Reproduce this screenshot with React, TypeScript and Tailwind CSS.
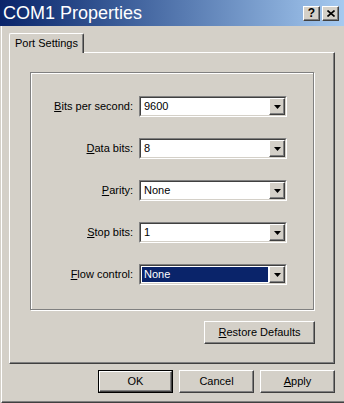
const raised =
  "border border-t-white border-l-white border-r-[#404040] border-b-[#404040] shadow-[inset_-1px_-1px_0_#808080]";

const fields = [
  { key: "B", rest: "its per second:", value: "9600" },
  { key: "D", rest: "ata bits:", value: "8" },
  { key: "P", rest: "arity:", value: "None" },
  { key: "S", rest: "top bits:", value: "1" },
  { key: "F", rest: "low control:", value: "None", selected: true },
];

function Arrow() {
  return (
    <svg width="7" height="4" viewBox="0 0 7 4">
      <polygon points="0,0 7,0 3.5,4" fill="#000" />
    </svg>
  );
}

function Combo({ value, selected }: { value: string; selected?: boolean }) {
  return (
    <div className="flex h-[21px] w-[148px] border border-t-[#808080] border-l-[#808080] border-r-white border-b-white">
      <div className="flex flex-1 items-stretch border border-t-[#404040] border-l-[#404040] border-r-[#d4d0c8] border-b-[#d4d0c8] bg-white">
        <div className="flex flex-1 items-center p-px">
          <div
            className={
              selected
                ? "flex h-full flex-1 items-center bg-[#0a246a] pl-[2px] text-white"
                : "flex h-full flex-1 items-center pl-[2px] text-black"
            }
          >
            {value}
          </div>
        </div>
        <div
          className={`flex w-[16px] items-center justify-center bg-[#d4d0c8] ${raised}`}
        >
          <Arrow />
        </div>
      </div>
    </div>
  );
}

function Button({
  children,
  width,
  isDefault,
}: {
  children: React.ReactNode;
  width: string;
  isDefault?: boolean;
}) {
  const face = (
    <div
      className={`flex h-full w-full items-center justify-center bg-[#d4d0c8] ${raised}`}
    >
      {children}
    </div>
  );
  return (
    <div className={`h-[23px] ${width}`}>
      {isDefault ? (
        <div className="h-full w-full border border-black">{face}</div>
      ) : (
        face
      )}
    </div>
  );
}

export default function App() {
  return (
    <div
      className="flex h-[403px] w-[344px] flex-col bg-[#d4d0c8] text-[11px] text-black"
      style={{ fontFamily: '"Liberation Sans", Arial, sans-serif' }}
    >
      <div className="flex h-[26px] items-center justify-between bg-gradient-to-r from-[#0a246a] to-[#a6caf0] pl-[3px] pr-[5px]">
        <span className="text-[18px] leading-none text-white">
          COM1 Properties
        </span>
        <div className="flex gap-[2px]">
          <div
            className={`flex h-[15px] w-[17px] items-center justify-center bg-[#d4d0c8] text-[12px] font-bold leading-none ${raised}`}
          >
            ?
          </div>
          <div
            className={`flex h-[15px] w-[17px] items-center justify-center bg-[#d4d0c8] ${raised}`}
          >
            <svg width="8" height="7" viewBox="0 0 8 7">
              <path d="M0.5 0.5 L7.5 6.5 M7.5 0.5 L0.5 6.5" stroke="#000" strokeWidth="1.6" />
            </svg>
          </div>
        </div>
      </div>

      <div className="ml-[1px] flex flex-1 flex-col border-b border-l border-b-[#404040] border-l-white pl-[7px] pt-[7px] shadow-[inset_0_-1px_0_#808080]">
        <div className="relative z-10 -mb-px flex h-[20px] w-[75px] items-center justify-center rounded-t-[2px] border border-b-0 border-t-white border-l-white border-r-[#404040] bg-[#d4d0c8] shadow-[inset_-1px_0_0_#808080]">
          Port Settings
        </div>

        <div className="flex h-[312px] w-[326px] flex-col border border-t-white border-l-white border-r-[#404040] border-b-[#404040] pl-[20px] pt-[19px] shadow-[inset_-1px_-1px_0_#808080]">
          <div className="flex h-[238px] w-[284px] flex-col gap-[21px] border border-[#808080] pt-[23px] shadow-[inset_1px_1px_0_#fff,1px_1px_0_#fff]">
            {fields.map((f) => (
              <div key={f.key} className="flex items-center">
                <div className="w-[102px] text-right">
                  <span className="underline">{f.key}</span>
                  {f.rest}
                </div>
                <div className="ml-[6px]">
                  <Combo value={f.value} selected={f.selected} />
                </div>
              </div>
            ))}
          </div>
          <div className="mt-[11px] flex w-[285px] justify-end">
            <Button width="w-[111px]">
              <span>
                <span className="underline">R</span>estore Defaults
              </span>
            </Button>
          </div>
        </div>

        <div className="mt-[6px] flex w-[326px] justify-end gap-[6px]">
          <Button width="w-[75px]" isDefault>
            OK
          </Button>
          <Button width="w-[75px]">Cancel</Button>
          <Button width="w-[75px]">
            <span>
              <span className="underline">A</span>pply
            </span>
          </Button>
        </div>
      </div>
    </div>
  );
}
